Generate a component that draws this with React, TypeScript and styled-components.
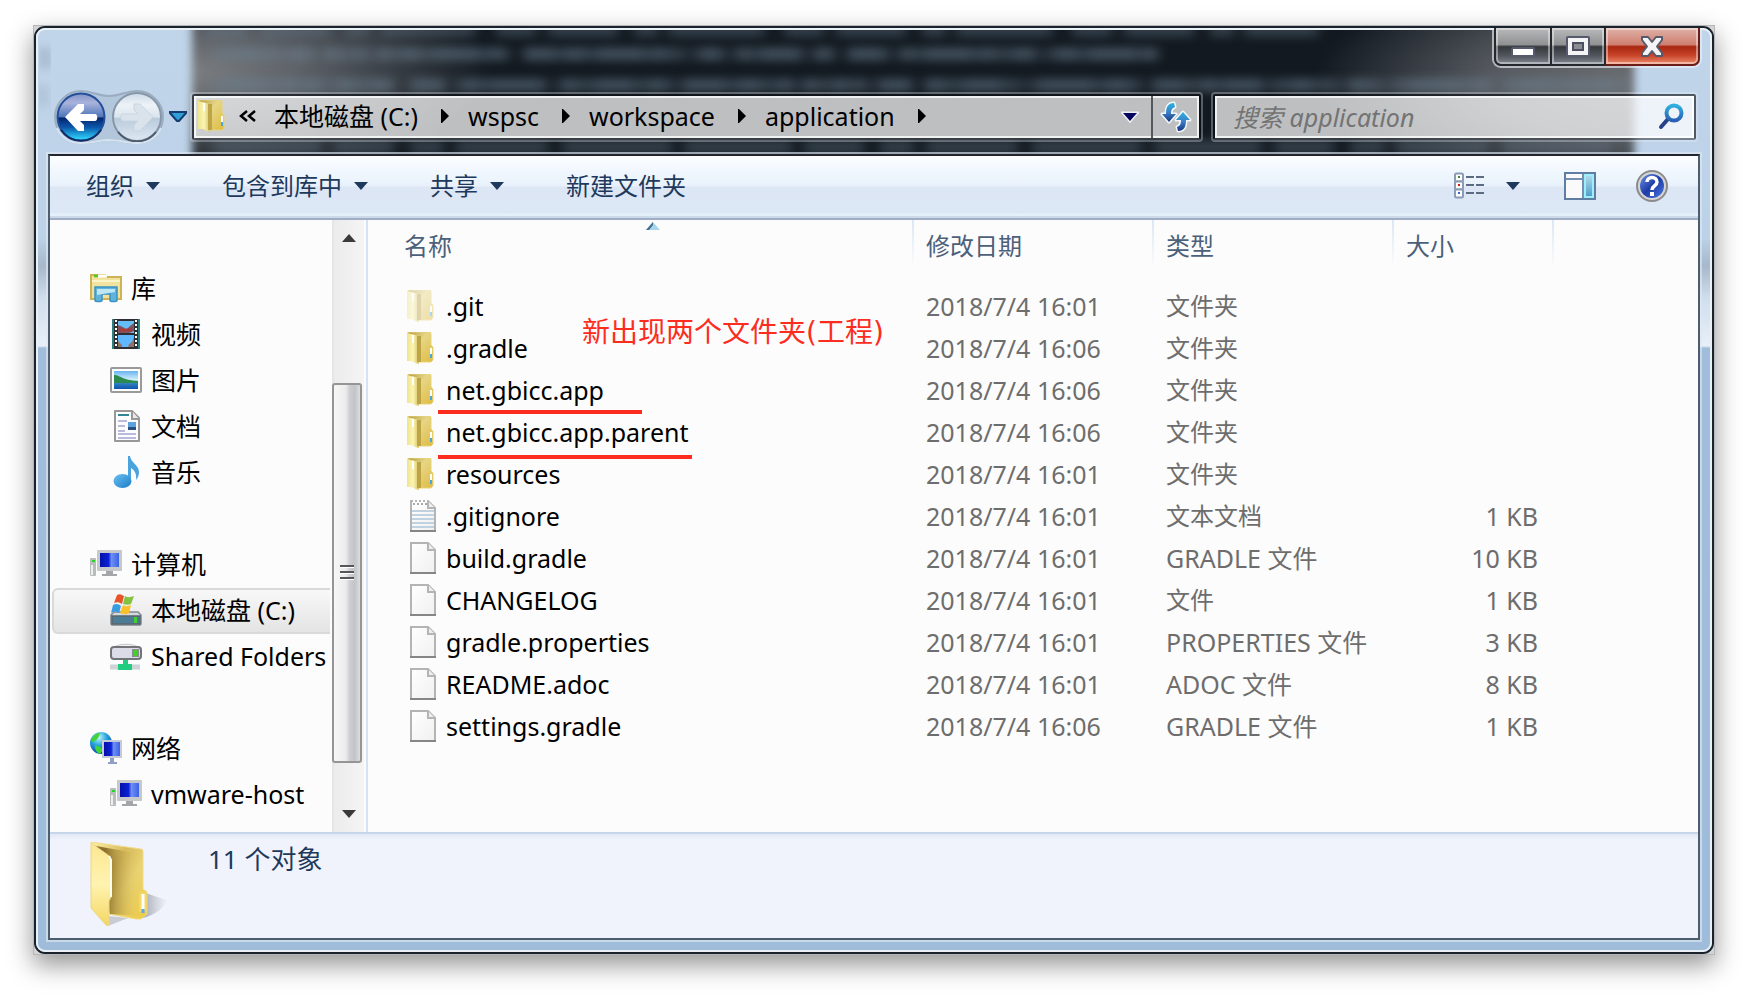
import React from 'react';
import styled, { createGlobalStyle } from 'styled-components';

const GlobalStyle = createGlobalStyle`
  *, *::before, *::after { box-sizing: border-box; }
  body {
    margin: 0;
    background: #fff;
    font-family: "Noto Sans", "Noto Sans CJK SC", sans-serif;
    font-size: 24px;
    line-height: 32px;
    color: #000;
  }
  button, input { font: inherit; color: inherit; }
  button { padding: 0; border: 0; background: none; cursor: pointer; }
  svg { display: block; flex: none; }
`;

/* ---------- window frame ---------- */

const Desktop = styled.main`
  display: flex;
  flex-direction: column;
  min-height: 100vh;
  padding: 25px 33px 41px;
`;

const Shadow = styled.div`
  display: flex;
  flex: 1;
  border: 1px solid #b4b6b8;
  background: #d2d4d5;
  box-shadow: 0 10px 24px rgba(0, 0, 0, 0.42);
`;

const Frame = styled.div`
  display: flex;
  flex: 1;
  min-width: 0;
  border: 2px solid #1a222c;
  border-radius: 11px;
  background: linear-gradient(
    180deg,
    #c1d5ea 0,
    #bcd2e8 210px,
    #a6b8ca 238px,
    #d0deed 270px,
    #e8eff7 318px,
    #a0bddb 320px,
    #9fbddb 100%
  );
`;

const Glass = styled.div`
  position: relative;
  display: flex;
  flex: 1;
  flex-direction: column;
  min-width: 0;
  padding: 0 8px 8px;
  border: 2px solid #e9f1f6;
  border-radius: 9px;
`;

const Client = styled.div`
  position: relative;
  display: flex;
  flex: 1;
  flex-direction: column;
  border: 2px solid #4d5d6e;
  border-top-color: #23262e;
  outline: 2px solid rgba(222, 232, 243, 0.65);
  background: #fcfcfc;
  margin: 2px;
`;

/* ---------- blurred window behind the glass ---------- */

const Behind = styled.div`
  position: absolute;
  top: 0;
  left: 0;
  right: 0;
  height: 124px;
  overflow: hidden;
`;

const DarkPane = styled.div`
  position: absolute;
  inset: -20px 76px -20px 154px;
  background:
    radial-gradient(ellipse 300px 110px at 0 38%, #7b7e81 0, #5e6268 35%, transparent 100%),
    radial-gradient(ellipse 320px 120px at 100% 45%, #6c6f72 0, #565a60 45%, transparent 100%),
    #121920;
  filter: blur(4px);
`;

const GlowLines = styled.svg`
  position: absolute;
  inset: 0;
  width: 100%;
  height: 100%;
`;

function Backdrop() {
  return (
    <Behind aria-hidden="true">
      <DarkPane />
      <GlowLines>
        <defs>
          <filter id="soft" x="-5%" y="-300%" width="110%" height="700%">
            <feGaussianBlur stdDeviation="6 4" />
          </filter>
        </defs>
        <g filter="url(#soft)" stroke="#6d8294" strokeWidth="14">
          <g opacity=".34">
            <path d="M170 0H1280" strokeDasharray="40 12 70 16 24 10 96 20" />
            <path d="M176 24H1120" strokeDasharray="62 12 24 10 44 12 132 14 160 16 26 12" />
            <path d="M176 55H1590" strokeDasharray="108 12 60 16 34 12 92 14 110 12" />
            <path d="M176 117H1590" strokeDasharray="108 12 60 16 34 12 92 14 110 12" />
          </g>
          <g opacity=".2">
            <path d="M200 24H1120" strokeDasharray="18 14 46 9 12 22 31 12" />
            <path d="M190 55H1590" strokeDasharray="36 18 14 9 52 13 22 20" />
          </g>
        </g>
        <g filter="url(#soft)" stroke="#7f93a6" strokeWidth="22" opacity=".5">
          <path d="M2 28h10M2 66h6" />
        </g>
      </GlowLines>
    </Behind>
  );
}

/* ---------- title bar ---------- */

const Header = styled.header`
  position: relative;
  display: flex;
  flex-direction: column;
  height: 122px;
`;

const Controls = styled.div`
  display: flex;
  align-self: flex-end;
  height: 40px;
  margin-top: -2px;
  border: 2px solid rgba(235, 240, 245, 0.65);
  border-top: 0;
  border-radius: 0 0 9px 9px;
`;

const ControlButton = styled.button<{ $width: number; $tone?: 'close' }>`
  display: flex;
  align-items: center;
  justify-content: center;
  width: ${(p) => p.$width}px;
  border: 2px solid ${(p) => (p.$tone ? '#6b1d17' : '#25282d')};
  border-top: 0;
  border-left-width: ${(p) => (p.$tone ? 0 : 2)}px;
  box-shadow: inset 0 0 0 2px rgba(255, 255, 255, 0.42);
  background: ${(p) =>
    p.$tone
      ? 'linear-gradient(180deg, #dfb2a8 0, #cf7f70 46%, #a92610 52%, #c8442a 76%, #ec8a6c 100%)'
      : 'linear-gradient(180deg, #b9babb 0, #8f9192 46%, #35393d 52%, #50555c 76%, #80858f 100%)'};
  &:first-child { border-radius: 0 0 0 7px; }
  &:last-child { border-radius: 0 0 7px 0; }
  & + & { border-left-width: 0; }
`;

const MinimizeGlyph = () => (
  <svg width="26" height="24" viewBox="0 0 26 24">
    <rect x="2" y="14" width="22" height="8" rx="1" fill="#fff" stroke="#565a6c" strokeWidth="2" />
  </svg>
);

const MaximizeGlyph = () => (
  <svg width="26" height="24" viewBox="0 0 26 24">
    <rect x="2" y="3" width="22" height="19" rx="1" fill="#f4f4f6" stroke="#565a6c" strokeWidth="2" />
    <rect x="8" y="9" width="10" height="7" fill="#8b8d92" stroke="#4b4f60" strokeWidth="2" />
  </svg>
);

const CloseGlyph = () => (
  <svg width="26" height="24" viewBox="0 0 26 24">
    <path
      d="M3 3h6l4 5 4-5h6v3l-5 6.500 5 6.500v3h-6l-4-5-4 5H3v-3l5-6.500L3 6z"
      fill="#f4f4f6"
      stroke="#565a6c"
      strokeWidth="2"
      strokeLinejoin="round"
    />
  </svg>
);

/* ---------- navigation row ---------- */

const NavRow = styled.div`
  display: flex;
  align-items: center;
  height: 50px;
  margin: 24px 6px 0 8px;
`;

const Travel = styled.div`
  position: relative;
  display: flex;
  align-items: center;
  gap: 6px;
  height: 50px;
  padding: 0 2px;
`;

const TravelShade = styled.svg`
  position: absolute;
  inset: -2px 0 0;
`;

const TravelButton = styled.button`
  position: relative;
`;

const HistoryButton = styled.button`
  display: flex;
  justify-content: center;
  width: 28px;
`;

const boxed = `
  display: flex;
  align-items: stretch;
  height: 46px;
  border: 2px solid rgba(10, 14, 18, 0.62);
  border-bottom-color: rgba(70, 76, 82, 0.62);
  border-radius: 2px;
  outline: 2px solid rgba(235, 240, 246, 0.32);
  box-shadow: inset 0 0 0 2px rgba(255, 255, 255, 0.78);
  background: rgba(255, 255, 255, 0.72);
  background-clip: padding-box;
`;

const AddressBar = styled.div`
  ${boxed}
  flex: 1;
  min-width: 0;
`;

const Crumbs = styled.nav`
  display: flex;
  flex: 1;
  align-items: center;
  padding: 0 0 2px 3px;
  min-width: 0;
`;

const Chevrons = styled.button`
  display: flex;
  justify-content: center;
  width: 26px;
  margin: 0 13px 0 6px;
`;

const Crumb = styled.button`
  display: flex;
  align-items: center;
  gap: 23px;
  margin-right: 19px;
  line-height: 32px;
  font-size: 25px;
  white-space: nowrap;
`;

const AddressButton = styled.button<{ $divided?: boolean }>`
  display: flex;
  align-items: center;
  justify-content: center;
  width: ${(p) => (p.$divided ? 48 : 42)}px;
  border-left: ${(p) => (p.$divided ? '2px solid #55585b' : '0')};
`;

const SearchBox = styled.label`
  ${boxed}
  flex: 0 1 483px;
  align-items: center;
  min-width: 0;
  margin-left: 12px;
  padding: 0 10px 0 18px;
`;

const SearchInput = styled.input`
  flex: 1;
  min-width: 0;
  padding: 0;
  border: 0;
  outline: 0;
  background: none;
  font-size: 25px;
  line-height: 32px;
  &::placeholder {
    color: #737373;
    font-style: italic;
    opacity: 1;
  }
`;

const BackIcon = () => (
  <svg width="50" height="50" viewBox="0 0 50 50">
    <defs>
      <linearGradient id="backTop" x1="0" y1="0" x2="0" y2="1">
        <stop offset="0" stopColor="#8393c8" />
        <stop offset=".2" stopColor="#a9b4dc" />
        <stop offset=".5" stopColor="#4d74b8" />
        <stop offset=".52" stopColor="#04246a" />
        <stop offset=".72" stopColor="#0b57ab" />
        <stop offset=".98" stopColor="#2fd9fb" />
      </linearGradient>
    </defs>
    <circle cx="25" cy="25" r="23.500" fill="url(#backTop)" stroke="#254f9a" strokeWidth="2" />
    <path d="M5 38a24 24 0 0 0 40 0" fill="none" stroke="#122c66" strokeWidth="2" />
    <path
      d="M9 25 22 12h6v6l-4 4h15c3 0 3 7 0 7H24l4 4v6h-6z"
      fill="#fff"
    />
  </svg>
);

const ForwardIcon = () => (
  <svg width="50" height="50" viewBox="0 0 50 50">
    <defs>
      <linearGradient id="fwd" x1="0" y1="0" x2="0" y2="1">
        <stop offset="0" stopColor="#cbd9e8" />
        <stop offset=".25" stopColor="#edf2f7" />
        <stop offset=".5" stopColor="#dbe5ee" />
        <stop offset=".53" stopColor="#b9cbdc" />
        <stop offset="1" stopColor="#dfe8f3" />
      </linearGradient>
    </defs>
    <circle cx="25" cy="25" r="24" fill="url(#fwd)" stroke="#8796a8" strokeWidth="2" />
    <path d="M6 40a24 24 0 0 0 38 0" fill="none" stroke="#4e5c6c" strokeWidth="2" />
    <path
      d="M41 25 28 12h-6v6l4 4H11c-3 0-3 7 0 7h15l-4 4v6h6z"
      fill="#dae3ec"
      stroke="#c9d5e1"
      strokeWidth="1"
    />
  </svg>
);

const RefreshIcon = () => (
  <svg width="32" height="32" viewBox="0 0 32 32">
    <defs>
      <linearGradient id="refresh" x1="0" y1="0" x2="0" y2="1">
        <stop offset="0" stopColor="#29b3dd" />
        <stop offset=".5" stopColor="#3b7fc9" />
        <stop offset="1" stopColor="#17357c" />
      </linearGradient>
    </defs>
    <g fill="url(#refresh)" stroke="#f3f7fb" strokeWidth="3" paintOrder="stroke" strokeLinejoin="round">
      <path d="M14 2c-6 0-8 4-8 11H2l7 8 7-8h-5c0-4 1-6 4-7z" />
      <path d="M18 30c6 0 8-4 8-11h4l-7-8-7 8h5c0 4-1 6-4 7z" />
    </g>
  </svg>
);

const SearchIcon = () => (
  <svg width="26" height="30" viewBox="0 0 26 30">
    <defs>
      <linearGradient id="lens" x1="0" y1="0" x2="0" y2="1">
        <stop offset="0" stopColor="#2fb0de" />
        <stop offset="1" stopColor="#2b5fb4" />
      </linearGradient>
    </defs>
    <path d="M10 17 3 25" stroke="#27408a" strokeWidth="4" strokeLinecap="round" />
    <circle cx="16" cy="11" r="7.500" fill="none" stroke="url(#lens)" strokeWidth="4" />
  </svg>
);

const CrumbArrow = () => (
  <svg width="8" height="14" viewBox="0 0 8 14">
    <path d="M0 0h1l7 7-7 7H0z" fill="#000" />
  </svg>
);

/* ---------- command bar ---------- */

const Toolbar = styled.div`
  display: flex;
  align-items: center;
  height: 64px;
  padding: 0 30px 2px 36px;
  border-bottom: 2px solid #9fadc7;
  background: linear-gradient(
    180deg,
    #fdfeff 0,
    #f2f8fe 14px,
    #e8f1fb 30px,
    #dce6f4 31px,
    #dde8f6 57px,
    #e6f0fb 58px,
    #e6f0fb 60px,
    #ccd9e9 60px
  );
  color: #1e395b;
`;

const ToolButton = styled.button`
  display: flex;
  align-items: center;
  gap: 12px;
  margin-right: 62px;
  white-space: nowrap;
`;

const ToolIcons = styled.div`
  display: flex;
  align-items: center;
  gap: 40px;
  margin-left: auto;
`;

const ViewButton = styled.button`
  display: flex;
  align-items: center;
  gap: 22px;
  margin-right: 4px;
`;

const Caret = ({ color = '#1e395b' }: { color?: string }) => (
  <svg width="14" height="8" viewBox="0 0 14 8">
    <path d="M0 0h14L7 8z" fill={color} />
  </svg>
);

const ViewIcon = () => (
  <svg width="30" height="28" viewBox="0 0 30 28">
    {['#3c8a3c', '#e01010', '#2a6fd0'].map((dot, i) => (
      <g key={dot} transform={`translate(0 ${i * 8})`}>
        <rect x="1" y="1.500" width="8" height="8" rx="1.500" fill="#fff" stroke="#8a9bb3" strokeWidth="2" />
        <rect x="4" y="4" width="2" height="2" fill={dot} />
        <path d="M12 5h8M22 5h8" stroke="#5b6b81" strokeWidth="2" />
      </g>
    ))}
  </svg>
);

const PaneIcon = () => (
  <svg width="32" height="28" viewBox="0 0 32 28">
    <defs>
      <linearGradient id="pane" x1="0" y1="0" x2="0" y2="1">
        <stop offset="0" stopColor="#b5dcec" />
        <stop offset="1" stopColor="#4a9cc9" />
      </linearGradient>
    </defs>
    <rect x="1" y="1" width="30" height="26" fill="#fafafa" stroke="#5f7da3" strokeWidth="2" />
    <path d="M2 7h17M19 2v24" stroke="#7690b3" strokeWidth="2" />
    <rect x="21" y="3" width="8" height="22" fill="url(#pane)" stroke="#9ceef8" strokeWidth="2" />
  </svg>
);

const HelpIcon = () => (
  <svg width="32" height="32" viewBox="0 0 32 32">
    <defs>
      <linearGradient id="help" x1="0" y1="0" x2="1" y2="1">
        <stop offset="0" stopColor="#6f92e6" />
        <stop offset=".5" stopColor="#1d3ca6" />
        <stop offset="1" stopColor="#4d78e0" />
      </linearGradient>
    </defs>
    <circle cx="16" cy="16" r="15" fill="#d6d6d6" stroke="#8b8b8b" strokeWidth="2" />
    <circle cx="16" cy="16" r="12" fill="url(#help)" />
    <path
      d="M11 12c0-6 10-6 10 0 0 4-5 3.500-5 8"
      fill="none"
      stroke="#fff"
      strokeWidth="3.500"
    />
    <rect x="14" y="22" width="4" height="4" fill="#fff" />
  </svg>
);

/* ---------- navigation pane ---------- */

const Body = styled.div`
  display: flex;
  flex: 1;
  min-height: 0;
`;

const Sidebar = styled.nav`
  flex: none;
  width: 282px;
  padding: 46px 2px 14px;
  overflow: hidden;
`;

const TreeGroup = styled.ul`
  margin: 0 0 46px;
  padding: 0;
  list-style: none;
  &:last-child { margin-bottom: 0; }
`;

const TreeLink = styled.a<{ $nested?: boolean; $selected?: boolean }>`
  display: flex;
  align-items: center;
  gap: 9px;
  height: 46px;
  padding: 0 0 2px ${(p) => (p.$nested ? 56 : 36)}px;
  border: 2px solid ${(p) => (p.$selected ? '#d9d9d9' : 'transparent')};
  border-right: 0;
  border-radius: 6px 0 0 6px;
  background: ${(p) => (p.$selected ? 'linear-gradient(180deg, #f8f8f8, #e4e4e4)' : 'none')};
  color: #000;
  font-size: 25px;
  text-decoration: none;
  white-space: nowrap;
`;

const ScrollTrack = styled.div`
  display: flex;
  flex: none;
  flex-direction: column;
  align-items: center;
  width: 32px;
  padding: 14px 0;
  border-left: 2px solid #e6e6e6;
  background: linear-gradient(90deg, #ececec, #f4f4f4);
`;

const ScrollArrow = styled.button`
  display: flex;
  align-items: center;
  height: 8px;
`;

const ScrollSpace = styled.div<{ $grow: number }>`
  flex: ${(p) => p.$grow} 1 0;
`;

const ScrollThumb = styled.div`
  display: flex;
  flex: 380 1 0;
  flex-direction: column;
  align-items: center;
  justify-content: center;
  gap: 3px;
  align-self: stretch;
  margin: 0 2px 0 -2px;
  border: 2px solid #959595;
  border-radius: 3px;
  background: linear-gradient(90deg, #f7f7f7 0, #ececec 45%, #cfcfd3 60%, #c3c4c8 80%, #dedede 100%);
`;

const GripLine = styled.i`
  width: 14px;
  height: 3px;
  border-top: 2px solid #55575a;
  border-bottom: 1px solid #fff;
`;

const LibraryIcon = () => (
  <svg width="32" height="32" viewBox="0 0 32 32">
    <path d="M1 3h14l2 2h14v22H1z" fill="#f1e29d" stroke="#cdb356" strokeWidth="2" />
    <path d="M8 4h9" stroke="#fff" strokeWidth="3" />
    <path d="M4 4h4" stroke="#52c81e" strokeWidth="2.500" />
    <path d="M2 9h28" stroke="#fbf4c8" strokeWidth="2" />
    <path
      d="M5 15h22v13c0 1-1 1.500-2 1.500h-3c-1 0-2-.5-2-1.500v-6h-8v6c0 1-1 1.500-2 1.500H7c-1 0-2-.5-2-1.500z"
      fill="#5fb4dc"
      stroke="#3a93c4"
      strokeWidth="1.500"
    />
    <path d="M7 17h18v3l-18 3z" fill="#bfe6f5" />
  </svg>
);

const VideoIcon = () => (
  <svg width="32" height="32" viewBox="0 0 32 32">
    <rect x="2" y="1" width="28" height="30" fill="#2d2f33" />
    <path d="M3 1v30M29 1v30" stroke="#2c8080" strokeWidth="2" />
    <path d="M6 2v28M26 2v28" stroke="#fff" strokeWidth="2" strokeDasharray="2 2" />
    <rect x="8" y="3" width="16" height="12" fill="#66bdf8" />
    <rect x="8" y="17" width="16" height="12" fill="#5fb8ff" />
    <path d="M8 7l5 2 3 3 4-4 4-3v8l-5 2H8z" fill="#7a5560" />
    <path d="M9 12h13" stroke="#a93a3a" strokeWidth="3" />
    <path d="M8 23l4 4v2H8zM24 19v10h-6l1-3 3-2z" fill="#8f7366" />
  </svg>
);

const PictureIcon = () => (
  <svg width="32" height="32" viewBox="0 0 32 32">
    <defs>
      <linearGradient id="sky" x1="0" y1="0" x2="0" y2="1">
        <stop offset="0" stopColor="#6ab4f0" />
        <stop offset=".5" stopColor="#d5f1fb" />
        <stop offset=".7" stopColor="#2f7cc0" />
        <stop offset="1" stopColor="#0d56ad" />
      </linearGradient>
    </defs>
    <rect x="1" y="4" width="30" height="24" rx="1" fill="#fff" stroke="#9a9a9a" strokeWidth="2" />
    <rect x="4" y="7" width="24" height="18" fill="url(#sky)" />
    <path d="M4 11c6 0 8 5 24 6v2H4z" fill="#2b8a4f" />
  </svg>
);

const DocumentIcon = () => (
  <svg width="32" height="32" viewBox="0 0 32 32">
    <path d="M5 1h17l7 7v23H5z" fill="#fdfdfd" stroke="#989898" strokeWidth="2" strokeLinejoin="round" />
    <path d="M22 1v8h7" fill="#e9e9e9" stroke="#989898" strokeWidth="2" />
    <path d="M8 5h11" stroke="#2f8793" strokeWidth="2" />
    <path d="M8 11h9M8 16h7M8 21h7M8 24h18M8 28h18" stroke="#b9bbdc" strokeWidth="2" />
    <rect x="18" y="12" width="8" height="8" fill="#5ea2dd" />
    <path d="M18 17h8v3h-8z" fill="#27507f" />
  </svg>
);

const MusicIcon = () => (
  <svg width="32" height="32" viewBox="0 0 32 32">
    <defs>
      <linearGradient id="note" x1="0" y1="0" x2="1" y2="1">
        <stop offset="0" stopColor="#6cc0f2" />
        <stop offset="1" stopColor="#1a7cc8" />
      </linearGradient>
    </defs>
    <path d="M18 0h2c1 7 9 9 9 16 0 3-1 6-3 8 1-7-2-10-5-12v13h-3z" fill="#4aa3dd" />
    <ellipse cx="12.500" cy="25" rx="9" ry="7" fill="url(#note)" />
  </svg>
);

const ComputerIcon = () => (
  <svg width="32" height="32" viewBox="0 0 32 32">
    <defs>
      <linearGradient id="screen" x1="0" y1="0" x2="1" y2="0">
        <stop offset="0" stopColor="#0510a8" />
        <stop offset=".45" stopColor="#0a22d6" />
        <stop offset=".6" stopColor="#6f90f2" />
        <stop offset="1" stopColor="#3a62ea" />
      </linearGradient>
    </defs>
    <rect x="0" y="10" width="6" height="18" rx="1" fill="#b9bcbd" />
    <rect x="2" y="12" width="3" height="2" fill="#26d326" />
    <path d="M2 17v10" stroke="#eee" strokeWidth="2" />
    <rect x="7" y="2" width="25" height="21" rx="1" fill="#c7c8ca" />
    <rect x="10" y="5" width="19" height="14" fill="url(#screen)" />
    <path d="M16 23h7v3h4v2H12v-2h4z" fill="#a3a5a8" />
  </svg>
);

const DriveIcon = () => (
  <svg width="32" height="32" viewBox="0 0 32 32">
    <path d="M4 18h24l3 3v9l-1 1H2l-1-1v-9z" fill="#d5d9dc" stroke="#83898e" strokeWidth="1.500" />
    <rect x="2" y="22" width="28" height="8" fill="#4c7d94" stroke="#5a666e" strokeWidth="1.500" />
    <rect x="24" y="23" width="3" height="6" fill="#45d12c" />
    <path d="M7 1c3-2 5 0 7 1l-2 8c-3-2-5-2-8-1z" fill="#e8542a" />
    <path d="M15 2c3 2 6 1 9 0l-3 8c-2 1-5 1-8 0z" fill="#82c341" />
    <path d="M3 11c3-2 6-1 8 1l-2 7c-3-2-5-2-8 0z" fill="#3a9ce0" />
    <path d="M13 11c3 2 5 1 8 0l-2 8c-3 2-6 1-9 0z" fill="#fbc02a" />
  </svg>
);

const SharedIcon = () => (
  <svg width="32" height="32" viewBox="0 0 32 32">
    <path d="M3 8c5-5 21-5 26 0z" fill="#f4f4f4" stroke="#c4c4c4" />
    <rect x="1" y="7" width="30" height="12" rx="3" fill="#dcdce8" stroke="#737478" strokeWidth="2" />
    <rect x="22" y="9" width="7" height="8" fill="#8b8d90" />
    <rect x="24" y="10" width="3" height="6" fill="#45d12c" />
    <path d="M0 27h30" stroke="#cdd3d6" strokeWidth="5" />
    <path d="M13 20h5v4h4v6H8v-6h5z" fill="#22cc80" />
  </svg>
);

const NetworkIcon = () => (
  <svg width="32" height="32" viewBox="0 0 32 32">
    <defs>
      <radialGradient id="globe" cx=".4" cy=".25" r=".8">
        <stop offset="0" stopColor="#c7f4fb" />
        <stop offset=".45" stopColor="#28a6dc" />
        <stop offset="1" stopColor="#0b3ba8" />
      </radialGradient>
    </defs>
    <circle cx="11" cy="11" r="11" fill="url(#globe)" />
    <path d="M2 6c3-4 5-5 8-5-1 4-3 8-8 9zM5 14c3-1 6 1 8 4l-3 4c-3-1-5-4-5-8z" fill="#3fd43a" />
    <rect x="12" y="8" width="20" height="18" fill="#c7ccd4" />
    <rect x="14" y="10" width="16" height="14" fill="url(#screen)" />
    <path d="M20 26h4v4h3v2h-9v-2h2z" fill="#8fa0c4" />
  </svg>
);

/* ---------- file list ---------- */

const List = styled.section`
  position: relative;
  flex: 1;
  min-width: 0;
  margin-left: 2px;
  padding-left: 24px;
  border-left: 2px solid #d5e2f4;
`;

const Files = styled.table`
  width: 100%;
  table-layout: fixed;
  border-collapse: collapse;
  color: #6d6d6d;
`;

const Column = styled.col<{ $width?: number }>`
  width: ${(p) => (p.$width ? `${p.$width}px` : 'auto')};
`;

const HeadCell = styled.th`
  position: relative;
  height: 65px;
  padding: 10px 12px 0;
  background: linear-gradient(180deg, #d9e7f5, #fcfcfc) right 0 top 0 / 2px 48px no-repeat;
  color: #4c607a;
  font-weight: 400;
  text-align: left;
  vertical-align: top;
`;

const SortMark = styled.svg`
  position: absolute;
  top: 2px;
  left: 50%;
  margin-left: -7px;
`;

const Cell = styled.td<{ $latin?: boolean; $end?: boolean }>`
  height: 42px;
  padding: 0 ${(p) => (p.$end ? 16 : 12)}px 0 12px;
  font-size: ${(p) => (p.$latin ? 25 : 24)}px;
  text-align: ${(p) => (p.$end ? 'right' : 'left')};
  white-space: nowrap;
`;

const FileName = styled.div`
  display: flex;
  align-items: center;
  gap: 8px;
  padding-left: 2px;
  color: #000;
  font-size: 25px;
`;

const FolderIcon = ({ faded }: { faded?: boolean }) => (
  <svg width="32" height="32" viewBox="0 0 32 32" opacity={faded ? 0.45 : 1}>
    <defs>
      <linearGradient id="folderBack" x1="0" y1="0" x2="1" y2="1">
        <stop offset="0" stopColor="#b39b43" />
        <stop offset=".4" stopColor="#e7d687" />
        <stop offset="1" stopColor="#dfbb3f" />
      </linearGradient>
      <linearGradient id="folderLeaf" x1="0" y1="0" x2="1" y2="0">
        <stop offset="0" stopColor="#f0e38a" />
        <stop offset=".5" stopColor="#fbf5b4" />
        <stop offset="1" stopColor="#d9c162" />
      </linearGradient>
    </defs>
    <path d="M2 0h22l1 1v12l2 2v13l-2 2H14L2 28z" fill="url(#folderBack)" stroke="#e6d37a" />
    <path d="M1 1l12 3v28l-4-1-2-2H1z" fill="url(#folderLeaf)" />
    <path d="M7 3v8" stroke="#fff" strokeWidth="2" />
    <path d="M13 4v26" stroke="#bda445" strokeWidth="4" />
    <path d="M25 16v6" stroke="#fff" strokeWidth="2" />
    <path d="M25 22v4" stroke="#4aa6e0" strokeWidth="2" />
  </svg>
);

const PageIcon = ({ lined }: { lined?: boolean }) => (
  <svg width="32" height="32" viewBox="0 0 32 32">
    <defs>
      <linearGradient id="sheet" x1="0" y1="0" x2="1" y2="1">
        <stop offset="0" stopColor="#fff" />
        <stop offset="1" stopColor="#f0f0f0" />
      </linearGradient>
    </defs>
    <path d="M5 1h17l7 7v23H5z" fill="url(#sheet)" stroke="#b4b4b4" strokeWidth="2" />
    <path d="M22 1v7h7" fill="#eee" stroke="#b4b4b4" strokeWidth="2" />
    <path d="M4 31h26" stroke="#868686" strokeWidth="2" />
    {lined && (
      <>
        <path d="M6 11h22M6 15h22M6 19h22M6 23h22M6 27h22" stroke="#c0d2e0" strokeWidth="2" />
        <path d="M7 1h15" stroke="#fcfcfc" strokeWidth="3" strokeDasharray="2 2" />
        <path d="M7 4h15" stroke="#a9a9a9" strokeWidth="2" strokeDasharray="2 2" />
      </>
    )}
  </svg>
);

const Note = styled.p`
  position: absolute;
  top: 93px;
  left: 214px;
  margin: 0;
  color: #fc2d1f;
  font-family: "DejaVu Sans", "Noto Sans CJK SC", sans-serif;
  font-size: 28px;
  line-height: 40px;
  white-space: nowrap;
`;

const Underline = styled.div<{ $top: number; $width: number }>`
  position: absolute;
  top: ${(p) => p.$top}px;
  left: 70px;
  width: ${(p) => p.$width}px;
  height: 4px;
  background: #fc2d1f;
`;

/* ---------- details pane ---------- */

const Details = styled.footer`
  display: flex;
  gap: 39px;
  height: 106px;
  padding: 8px 40px;
  border-top: 2px solid #c6d6ea;
  background: linear-gradient(180deg, #e2eaf5 0, #f0f3fb 6px);
  color: #1e395b;
`;

const Count = styled.span`
  padding-top: 1px;
  font-size: 26px;
  line-height: 32px;
`;

const BigFolder = () => (
  <svg width="79" height="88" viewBox="0 0 79 88">
    <defs>
      <linearGradient id="bigBack" x1="0" y1="0" x2="1" y2="1">
        <stop offset="0" stopColor="#fff0a8" />
        <stop offset=".35" stopColor="#d8bb5c" />
        <stop offset=".6" stopColor="#e9d372" />
        <stop offset="1" stopColor="#efcb45" />
      </linearGradient>
      <linearGradient id="bigShade" x1="0" y1="0" x2="1" y2="0">
        <stop offset=".2" stopColor="#7c5f1c" stopOpacity=".85" />
        <stop offset="1" stopColor="#e8cf6c" stopOpacity="0" />
      </linearGradient>
      <linearGradient id="bigLeaf" x1="0" y1="0" x2="0" y2="1">
        <stop offset="0" stopColor="#fbe792" />
        <stop offset=".5" stopColor="#fff3b0" />
        <stop offset="1" stopColor="#f3d663" />
      </linearGradient>
      <linearGradient id="bigCast" x1="0" y1="0" x2="1" y2="0">
        <stop offset="0" stopColor="#70747c" stopOpacity=".75" />
        <stop offset="1" stopColor="#9a9fa8" stopOpacity="0" />
      </linearGradient>
    </defs>
    <path d="M52 50c8 2 16 6 26 8-6 10-16 17-30 19z" fill="url(#bigCast)" />
    <path d="M18 74l20 2-20 8z" fill="#8d8f96" opacity=".4" />
    <path d="M1 0l50 7q2 0 2 2v38l4 3v22l-6 5H46L19 72z" fill="url(#bigBack)" stroke="#f0dc8a" />
    <path d="M6 4l45 8v62L20 72z" fill="url(#bigShade)" />
    <path d="M1 1l17 12 3 4v38l-2 4v24q-2 2-4-1L1 66z" fill="url(#bigLeaf)" stroke="#ecd685" />
    <path d="M19 14l2 4v37" fill="none" stroke="#fffdf0" strokeWidth="2" />
    <rect x="49" y="50" width="7" height="20" rx="2" fill="#f3d866" />
    <path d="M53 52v15" stroke="#fff" strokeWidth="3" />
    <path d="M53 67v4" stroke="#5aa9ec" strokeWidth="3" />
  </svg>
);

/* ---------- data ---------- */

type FileKind = 'folder' | 'hidden' | 'text' | 'page';
type FileRow = { name: string; kind: FileKind; time: string; type: string; size?: string };

const files: FileRow[] = [
  { name: '.git', kind: 'hidden', time: '2018/7/4 16:01', type: '文件夹' },
  { name: '.gradle', kind: 'folder', time: '2018/7/4 16:06', type: '文件夹' },
  { name: 'net.gbicc.app', kind: 'folder', time: '2018/7/4 16:06', type: '文件夹' },
  { name: 'net.gbicc.app.parent', kind: 'folder', time: '2018/7/4 16:06', type: '文件夹' },
  { name: 'resources', kind: 'folder', time: '2018/7/4 16:01', type: '文件夹' },
  { name: '.gitignore', kind: 'text', time: '2018/7/4 16:01', type: '文本文档', size: '1 KB' },
  { name: 'build.gradle', kind: 'page', time: '2018/7/4 16:01', type: 'GRADLE 文件', size: '10 KB' },
  { name: 'CHANGELOG', kind: 'page', time: '2018/7/4 16:01', type: '文件', size: '1 KB' },
  { name: 'gradle.properties', kind: 'page', time: '2018/7/4 16:01', type: 'PROPERTIES 文件', size: '3 KB' },
  { name: 'README.adoc', kind: 'page', time: '2018/7/4 16:01', type: 'ADOC 文件', size: '8 KB' },
  { name: 'settings.gradle', kind: 'page', time: '2018/7/4 16:06', type: 'GRADLE 文件', size: '1 KB' },
];

type Place = { label: string; icon: React.ReactNode; root?: boolean; selected?: boolean };

const places: Place[][] = [
  [
    { label: '库', icon: <LibraryIcon />, root: true },
    { label: '视频', icon: <VideoIcon /> },
    { label: '图片', icon: <PictureIcon /> },
    { label: '文档', icon: <DocumentIcon /> },
    { label: '音乐', icon: <MusicIcon /> },
  ],
  [
    { label: '计算机', icon: <ComputerIcon />, root: true },
    { label: '本地磁盘 (C:)', icon: <DriveIcon />, selected: true },
    { label: 'Shared Folders', icon: <SharedIcon /> },
  ],
  [
    { label: '网络', icon: <NetworkIcon />, root: true },
    { label: 'vmware-host', icon: <ComputerIcon /> },
  ],
];

const commands = [
  { label: '组织', menu: true },
  { label: '包含到库中', menu: true },
  { label: '共享', menu: true },
  { label: '新建文件夹', menu: false },
];

const path = ['本地磁盘 (C:)', 'wspsc', 'workspace', 'application'];

const startsLatin = (text: string) => /^[\x20-\x7e]/.test(text);

function FileIcon({ kind }: { kind: FileKind }) {
  if (kind === 'folder' || kind === 'hidden') return <FolderIcon faded={kind === 'hidden'} />;
  return <PageIcon lined={kind === 'text'} />;
}

function TitleArea() {
  return (
    <Header>
      <Controls>
        <ControlButton $width={58} aria-label="最小化"><MinimizeGlyph /></ControlButton>
        <ControlButton $width={54} aria-label="最大化"><MaximizeGlyph /></ControlButton>
        <ControlButton $width={94} $tone="close" aria-label="关闭"><CloseGlyph /></ControlButton>
      </Controls>
      <NavRow>
        <Travel>
          <TravelShade width="110" height="54" viewBox="0 0 110 54">
            <path
              d="M27 1c12 0 16 5 28 5S71 1 83 1a26 26 0 0 1 0 52c-10 0-18-3-28-3s-16 3-28 3A26 26 0 0 1 27 1z"
              fill="#b3c7dc"
              stroke="#9badc0"
              strokeWidth="2"
            />
            <path d="M3 38a26 26 0 0 0 24 15c12 0 18-3 28-3s18 3 28 3a26 26 0 0 0 24-15" fill="none" stroke="#d6e3f0" strokeWidth="2" />
          </TravelShade>
          <TravelButton aria-label="后退"><BackIcon /></TravelButton>
          <TravelButton aria-label="前进"><ForwardIcon /></TravelButton>
        </Travel>
        <HistoryButton aria-label="最近浏览的位置">
          <svg width="20" height="14" viewBox="0 0 20 14">
            <path d="M2 2h16v1l-7 8H9L2 3z" fill="#2f9fd8" stroke="#173c72" strokeWidth="2" />
          </svg>
        </HistoryButton>
        <AddressBar>
          <Crumbs aria-label="地址">
            <FolderIcon />
            <Chevrons aria-label="上级位置">
              <svg width="18" height="14" viewBox="0 0 18 14">
                <path d="M8 2 2 7l6 5M16 2l-6 5 6 5" fill="none" stroke="#000" strokeWidth="2.500" />
              </svg>
            </Chevrons>
            {path.map((step) => (
              <Crumb key={step}>{step}<CrumbArrow /></Crumb>
            ))}
          </Crumbs>
          <AddressButton aria-label="以前的位置">
            <svg width="18" height="14" viewBox="0 0 18 14">
              <path d="M2 3h14l-7 8z" fill="#050560" stroke="#eef0f4" strokeWidth="3" paintOrder="stroke" />
            </svg>
          </AddressButton>
          <AddressButton $divided aria-label="刷新"><RefreshIcon /></AddressButton>
        </AddressBar>
        <SearchBox>
          <SearchInput type="text" placeholder="搜索 application" aria-label="搜索 application" />
          <SearchIcon />
        </SearchBox>
      </NavRow>
    </Header>
  );
}

export default function App() {
  return (
    <Desktop>
      <GlobalStyle />
      <Shadow>
        <Frame>
          <Glass>
            <Backdrop />
            <TitleArea />
            <Client>
              <Toolbar>
                {commands.map((c) => (
                  <ToolButton key={c.label}>
                    {c.label}
                    {c.menu && <Caret />}
                  </ToolButton>
                ))}
                <ToolIcons>
                  <ViewButton aria-label="更改您的视图"><ViewIcon /><Caret /></ViewButton>
                  <button aria-label="显示预览窗格"><PaneIcon /></button>
                  <button aria-label="获取帮助"><HelpIcon /></button>
                </ToolIcons>
              </Toolbar>
              <Body>
                <Sidebar aria-label="导航窗格">
                  {places.map((group) => (
                    <TreeGroup key={group[0].label}>
                      {group.map((p) => (
                        <li key={p.label}>
                          <TreeLink href="#" $nested={!p.root} $selected={p.selected}>
                            {p.icon}
                            {p.label}
                          </TreeLink>
                        </li>
                      ))}
                    </TreeGroup>
                  ))}
                </Sidebar>
                <ScrollTrack>
                  <ScrollArrow aria-label="向上滚动">
                    <svg width="14" height="8" viewBox="0 0 14 8"><path d="M7 0l7 8H0z" fill="#3a3a3a" /></svg>
                  </ScrollArrow>
                  <ScrollSpace $grow={142} />
                  <ScrollThumb><GripLine /><GripLine /><GripLine /></ScrollThumb>
                  <ScrollSpace $grow={48} />
                  <ScrollArrow aria-label="向下滚动"><Caret color="#3a3a3a" /></ScrollArrow>
                </ScrollTrack>
                <List>
                  <Files>
                    <colgroup>
                      <Column $width={522} />
                      <Column $width={240} />
                      <Column $width={240} />
                      <Column $width={160} />
                      <Column />
                    </colgroup>
                    <thead>
                      <tr>
                        <HeadCell scope="col">
                          名称
                          <SortMark width="14" height="8" viewBox="0 0 14 8">
                            <path d="M7 0l7 8H0z" fill="#a9d5ea" />
                            <path d="M7 0v3L3 8H0z" fill="#3f6f8c" />
                          </SortMark>
                        </HeadCell>
                        <HeadCell scope="col">修改日期</HeadCell>
                        <HeadCell scope="col">类型</HeadCell>
                        <HeadCell scope="col">大小</HeadCell>
                      </tr>
                    </thead>
                    <tbody>
                      {files.map((f) => (
                        <tr key={f.name}>
                          <Cell>
                            <FileName>
                              <FileIcon kind={f.kind} />
                              {f.name}
                            </FileName>
                          </Cell>
                          <Cell $latin>{f.time}</Cell>
                          <Cell $latin={startsLatin(f.type)}>{f.type}</Cell>
                          <Cell $latin $end>{f.size}</Cell>
                        </tr>
                      ))}
                    </tbody>
                  </Files>
                  <Note>新出现两个文件夹(工程)</Note>
                  <Underline $top={190} $width={204} />
                  <Underline $top={235} $width={254} />
                </List>
              </Body>
              <Details>
                <BigFolder />
                <Count>11 个对象</Count>
              </Details>
            </Client>
          </Glass>
        </Frame>
      </Shadow>
    </Desktop>
  );
}
